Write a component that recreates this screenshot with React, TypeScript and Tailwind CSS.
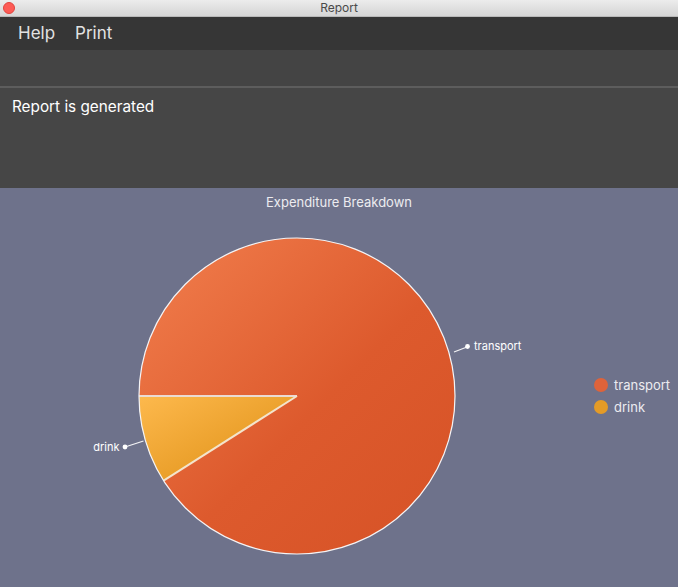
import React from "react";

const font = { fontFamily: "Inter, 'Noto Sans', 'Liberation Sans', sans-serif" };

function Pie() {
  const cx = 297;
  const cy = 180;
  const r = 158;
  const a = (32.4 * Math.PI) / 180;
  const ex = cx - r * Math.cos(a);
  const ey = cy + r * Math.sin(a);
  return (
    <svg width="580" height="371" viewBox="0 0 580 371" className="shrink-0">
      <defs>
        <linearGradient id="gT" x1="0" y1="0" x2="1" y2="1">
          <stop offset="0" stopColor="#f27f4e" />
          <stop offset="0.55" stopColor="#dd5a2d" />
          <stop offset="1" stopColor="#d65226" />
        </linearGradient>
        <linearGradient id="gD" x1="0" y1="0" x2="1" y2="1">
          <stop offset="0" stopColor="#fdb94d" />
          <stop offset="1" stopColor="#dd8d12" />
        </linearGradient>
      </defs>
      <path
        d={`M${cx},${cy} L${ex},${ey} A${r},${r} 0 1 0 ${cx - r},${cy} Z`}
        fill="url(#gT)"
      />
      <path
        d={`M${cx},${cy} L${cx - r},${cy} A${r},${r} 0 0 0 ${ex},${ey} Z`}
        fill="url(#gD)"
      />
      <line x1={cx} y1={cy} x2={cx - r} y2={cy} stroke="#eadbd2" strokeWidth="2" />
      <line x1={cx} y1={cy} x2={ex} y2={ey} stroke="#f3e4cc" strokeWidth="2" />
      <circle cx={cx} cy={cy} r={r} fill="none" stroke="#f4f4f6" strokeWidth="1.2" />
      <line x1="454" y1="136" x2="467" y2="131" stroke="#f4f4f6" strokeWidth="1.2" />
      <circle cx="467.5" cy="130.5" r="2.4" fill="#ffffff" />
      <text x="474" y="134" fontSize="11" fill="#ffffff" style={font}>
        transport
      </text>
      <line x1="143.5" y1="225" x2="125" y2="231" stroke="#f4f4f6" strokeWidth="1.2" />
      <circle cx="125" cy="231" r="2.4" fill="#ffffff" />
      <text x="119.5" y="235" fontSize="11" fill="#ffffff" textAnchor="end" style={font}>
        drink
      </text>
    </svg>
  );
}

export default function App() {
  return (
    <div className="w-[678px] h-[587px] flex flex-col overflow-hidden" style={font}>
      <div className="h-[17px] shrink-0 relative flex items-center justify-center bg-gradient-to-b from-[#ececec] to-[#d5d5d5] border-b border-[#b9b9b9]">
        <div className="absolute left-[3px] top-[2px] w-[12px] h-[12px] rounded-full bg-[#fd5b55] border border-[#e0443e]" />
        <span className="text-[12px] leading-none text-[#4a4a4a]">Report</span>
      </div>
      <div className="h-[33px] shrink-0 bg-[#363636] flex items-center gap-[20px] pl-[18px] pt-[1px]">
        <span className="text-[17px] text-[#e2e2e2]">Help</span>
        <span className="text-[17px] text-[#e2e2e2]">Print</span>
      </div>
      <div className="h-[36px] shrink-0 bg-[#444444]" />
      <div className="h-[2px] shrink-0 bg-[#5d5d5d]" />
      <div className="h-[100px] shrink-0 bg-[#464646] px-[12px] pt-[6px]">
        <span className="text-[15.3px] leading-[20px] text-white">Report is generated</span>
      </div>
      <div className="flex-1 bg-[#6e728b] flex flex-col">
        <div className="h-[28px] shrink-0 flex justify-center pt-[5px]">
          <span className="text-[13px] leading-[18px] text-[#ececf0]">Expenditure Breakdown</span>
        </div>
        <div className="flex-1 flex items-start">
          <Pie />
          <div className="flex flex-col gap-[6px] ml-[14px] mt-[161px]">
            <div className="flex items-center gap-[6px]">
              <div className="w-[14px] h-[14px] rounded-full bg-[#de633a]" />
              <span className="text-[13px] leading-[16px] text-[#ececf0]">transport</span>
            </div>
            <div className="flex items-center gap-[6px]">
              <div className="w-[14px] h-[14px] rounded-full bg-[#e49b27]" />
              <span className="text-[13px] leading-[16px] text-[#ececf0]">drink</span>
            </div>
          </div>
        </div>
      </div>
    </div>
  );
}
